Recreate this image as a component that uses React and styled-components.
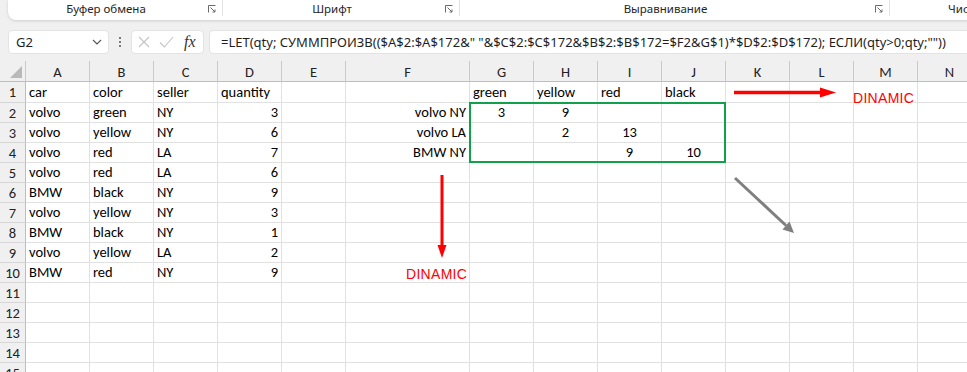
import styled, { createGlobalStyle } from "styled-components";

const GlobalStyle = createGlobalStyle`
  html, body {
    margin: 0;
    padding: 0;
    background: #f0f0f0;
  }
  * {
    box-sizing: border-box;
  }
`;

const CELL_FONT = `Calibri, Carlito, Lato, "Liberation Sans", sans-serif`;
const UI_FONT = `"Segoe UI", "Noto Sans", "Open Sans", sans-serif`;

const Page = styled.div`
  width: 967px;
  height: 372px;
  overflow: hidden;
  background: #f0f0f0;
  display: flex;
  flex-direction: column;
`;

const Ribbon = styled.div`
  margin-left: 8px;
  width: 1000px;
  height: 20px;
  background: #fff;
  border-radius: 0 0 8px 8px;
  box-shadow: 0 1px 3px rgba(0, 0, 0, 0.14);
  display: flex;
  flex-shrink: 0;
`;

const Group = styled.div`
  width: ${(p) => p.width}px;
  flex-shrink: 0;
  display: flex;
  align-items: center;
  border-right: ${(p) => (p.last ? "none" : "1px solid #e1e1e1")};
  height: 16px;
`;

const GroupLabel = styled.span`
  flex: ${(p) => (p.offset ? "none" : 1)};
  margin-left: ${(p) => p.offset || 0}px;
  text-align: center;
  font-family: ${UI_FONT};
  font-size: 11.5px;
  color: #262626;
  line-height: 16px;
  margin-top: 2px;
`;

const Launcher = styled.svg`
  width: 8px;
  height: 8px;
  margin: 2px 6px 0 4px;
  flex-shrink: 0;
`;

const FormulaBar = styled.div`
  display: flex;
  align-items: center;
  margin: 10px 0 0 8px;
  height: 24px;
  flex-shrink: 0;
`;

const Field = styled.div`
  height: 24px;
  flex-shrink: 0;
  background: #fff;
  border: 1px solid #e3e3e3;
  border-radius: 4px;
  display: flex;
  align-items: center;
  font-family: ${UI_FONT};
  color: #1f1f1f;
`;

const NameBox = styled(Field)`
  width: 101px;
  padding: 0 6px 0 7px;
  font-size: 13px;
  justify-content: space-between;
`;

const Dots = styled.div`
  width: 22px;
  flex-shrink: 0;
  display: flex;
  flex-direction: column;
  align-items: center;
  gap: 2px;
  span {
    width: 2px;
    height: 2px;
    background: #555;
    border-radius: 50%;
  }
`;

const ActionBox = styled(Field)`
  width: 73px;
  padding: 0 6px;
  gap: 9px;
`;

const Fx = styled.span`
  font-family: "Liberation Serif", "DejaVu Serif", serif;
  font-style: italic;
  font-size: 16px;
  color: #333;
  margin-left: 1px;
`;

const FormulaInput = styled(Field)`
  margin-left: 5px;
  width: 800px;
  padding-left: 11px;
  font-size: 13px;
  white-space: nowrap;
`;

const SheetWrap = styled.div`
  position: relative;
  margin-top: 7px;
  flex-shrink: 0;
`;

const Sheet = styled.div`
  display: grid;
  grid-template-columns: 26px repeat(5, 64px) 124px repeat(9, 64px);
  grid-template-rows: 21px 21px repeat(14, 20px);
  background: #fff;
  width: 1200px;
`;

const ColHead = styled.div`
  background: #f0f0f0;
  border-right: 1px solid #c9c9c9;
  border-bottom: 1px solid #bdbdbd;
  display: flex;
  align-items: center;
  justify-content: center;
  font-family: ${CELL_FONT};
  font-size: 14.5px;
  color: #222;
  padding-top: 1px;
`;

const Corner = styled(ColHead)`
  align-items: flex-end;
  justify-content: flex-end;
  padding: 0 3px 3px 0;
`;

const RowHead = styled.div`
  background: #f0f0f0;
  border-right: 1px solid #bdbdbd;
  border-bottom: 1px solid #d6d6d6;
  display: flex;
  align-items: center;
  justify-content: center;
  font-family: ${CELL_FONT};
  font-size: 14.5px;
  color: #222;
`;

const Cell = styled.div`
  border-right: 1px solid #e1e1e1;
  border-bottom: 1px solid #e1e1e1;
  font-family: ${CELL_FONT};
  font-size: 14.5px;
  color: #000;
  padding: 0 3px 1px;
  display: flex;
  align-items: flex-end;
  justify-content: ${(p) =>
    p.align === "right" ? "flex-end" : p.align === "center" ? "center" : "flex-start"};
  white-space: nowrap;
`;

const Overlay = styled.svg`
  position: absolute;
  left: 0;
  top: 0;
  pointer-events: none;
`;

const SpillBox = styled.div`
  position: absolute;
  left: 469px;
  top: 41px;
  width: 257px;
  height: 61px;
  border: 2px solid #12a14b;
  pointer-events: none;
`;

const Note = styled.span`
  position: absolute;
  left: ${(p) => p.x}px;
  top: ${(p) => p.y}px;
  font-family: "Liberation Sans", Arial, sans-serif;
  font-size: 14px;
  line-height: 16px;
  letter-spacing: 0.3px;
  color: #ff0000;
  pointer-events: none;
`;

const COLS = ["A", "B", "C", "D", "E", "F", "G", "H", "I", "J", "K", "L", "M", "N", "O"];

// cells by row: column letter -> value
const DATA = {
  1: { A: "car", B: "color", C: "seller", D: "quantity", G: "green", H: "yellow", I: "red", J: "black" },
  2: { A: "volvo", B: "green", C: "NY", D: 3, F: "volvo NY", G: 3, H: 9 },
  3: { A: "volvo", B: "yellow", C: "NY", D: 6, F: "volvo LA", H: 2, I: 13 },
  4: { A: "volvo", B: "red", C: "LA", D: 7, F: "BMW NY", I: 9, J: 10 },
  5: { A: "volvo", B: "red", C: "LA", D: 6 },
  6: { A: "BMW", B: "black", C: "NY", D: 9 },
  7: { A: "volvo", B: "yellow", C: "NY", D: 3 },
  8: { A: "BMW", B: "black", C: "NY", D: 1 },
  9: { A: "volvo", B: "yellow", C: "LA", D: 2 },
  10: { A: "BMW", B: "red", C: "NY", D: 9 },
};

const alignFor = (col, value) => {
  if (value === undefined) return "left";
  if (["G", "H", "I", "J"].includes(col) && typeof value === "number") return "center";
  if (col === "F") return "right";
  if (typeof value === "number") return "right";
  return "left";
};

const FORMULA =
  '=LET(qty; СУММПРОИЗВ(($A$2:$A$172&" "&$C$2:$C$172&$B$2:$B$172=$F2&G$1)*$D$2:$D$172); ЕСЛИ(qty>0;qty;""))';

const LauncherIcon = () => (
  <Launcher viewBox="0 0 8 8">
    <path d="M0.5 7.5V0.5H7.5" fill="none" stroke="#6a6a6a" strokeWidth="1" />
    <path d="M2.5 2.5L7 7M7 4.5V7H4.5" fill="none" stroke="#6a6a6a" strokeWidth="1" />
  </Launcher>
);

export default function App() {
  const rows = Array.from({ length: 15 }, (_, i) => i + 1);
  return (
    <Page>
      <GlobalStyle />
      <Ribbon>
        <Group width={215}>
          <GroupLabel>Буфер обмена</GroupLabel>
          <LauncherIcon />
        </Group>
        <Group width={237}>
          <GroupLabel>Шрифт</GroupLabel>
          <LauncherIcon />
        </Group>
        <Group width={430}>
          <GroupLabel>Выравнивание</GroupLabel>
          <LauncherIcon />
        </Group>
        <Group width={120} last>
          <GroupLabel offset={58}>Число</GroupLabel>
        </Group>
      </Ribbon>

      <FormulaBar>
        <NameBox>
          <span>G2</span>
          <svg width="10" height="6" viewBox="0 0 10 6">
            <path d="M1 1l4 4 4-4" fill="none" stroke="#555" strokeWidth="1.1" />
          </svg>
        </NameBox>
        <Dots>
          <span />
          <span />
          <span />
        </Dots>
        <ActionBox>
          <svg width="12" height="12" viewBox="0 0 12 12">
            <path d="M1 1l10 10M11 1L1 11" stroke="#c4c4c4" strokeWidth="1.1" />
          </svg>
          <svg width="15" height="12" viewBox="0 0 15 12">
            <path d="M1 6.5l4.5 4.5L14 1" fill="none" stroke="#c4c4c4" strokeWidth="1.1" />
          </svg>
          <Fx>fx</Fx>
        </ActionBox>
        <FormulaInput>{FORMULA}</FormulaInput>
      </FormulaBar>

      <SheetWrap>
        <Sheet>
          <Corner>
            <svg width="12" height="12" viewBox="0 0 12 12">
              <path d="M12 0V12H0Z" fill="#b9b9b9" />
            </svg>
          </Corner>
          {COLS.map((c) => (
            <ColHead key={c}>{c}</ColHead>
          ))}
          {rows.map((r) => [
            <RowHead key={`h${r}`}>{r}</RowHead>,
            ...COLS.map((c) => {
              const v = DATA[r] ? DATA[r][c] : undefined;
              return (
                <Cell key={`${c}${r}`} align={alignFor(c, v)}>
                  {v}
                </Cell>
              );
            }),
          ])}
        </Sheet>

        <SpillBox />

        <Overlay width="967" height="320" viewBox="0 0 967 320">
          <line x1="734" y1="31.5" x2="822" y2="31.5" stroke="#ff0000" strokeWidth="3.5" />
          <polygon points="820,26.5 836,31.5 820,36.5" fill="#ff0000" />
          <line x1="442" y1="114" x2="442" y2="186" stroke="#ff0000" strokeWidth="3" />
          <polygon points="437.5,184 446.5,184 442,197" fill="#ff0000" />
          <line x1="735" y1="117" x2="786" y2="164.5" stroke="#7f7f7f" strokeWidth="3" />
          <polygon points="782.5,168.5 789.5,160.5 794,172" fill="#7f7f7f" />
        </Overlay>

        <Note x={853} y={29}>
          DINAMIC
        </Note>
        <Note x={406} y={205}>
          DINAMIC
        </Note>
      </SheetWrap>
    </Page>
  );
}
